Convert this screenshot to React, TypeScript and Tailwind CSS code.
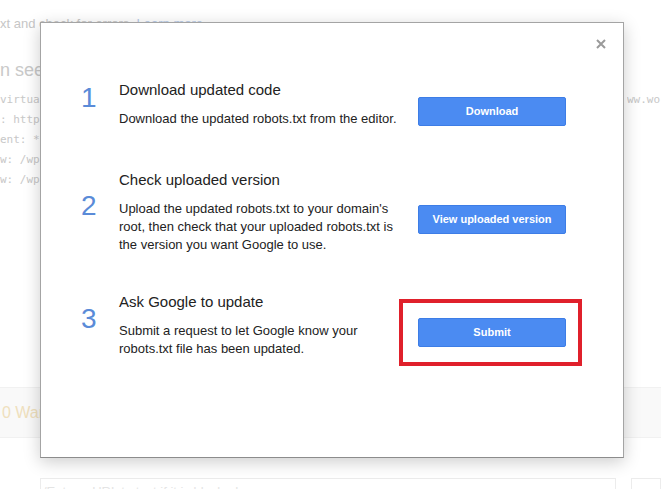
import React from "react";

const steps = [
  {
    n: "1",
    title: "Download updated code",
    desc: ["Download the updated robots.txt from the editor."],
    btn: "Download",
    mt: "mt-0",
    box: false,
  },
  {
    n: "2",
    title: "Check uploaded version",
    desc: [
      "Upload the updated robots.txt to your domain's",
      "root, then check that your uploaded robots.txt is",
      "the version you want Google to use.",
    ],
    btn: "View uploaded version",
    mt: "mt-[43px]",
    box: false,
  },
  {
    n: "3",
    title: "Ask Google to update",
    desc: ["Submit a request to let Google know your", "robots.txt file has been updated."],
    btn: "Submit",
    mt: "mt-[39px]",
    box: true,
  },
];

export default function App() {
  return (
    <div className="relative w-[661px] h-[489px] overflow-hidden bg-white font-['Liberation_Sans',Arial,sans-serif]">
      {/* faded background page */}
      <div className="flex flex-col whitespace-nowrap">
        <div className="mt-[16px] h-[16px] text-[13px] leading-[16px] text-[#c6c6c6]">
          xt and check for errors. <span className="text-[#b8cbe8]">Learn more</span>
        </div>
        <div className="mt-[26px] h-[24px] text-[18px] leading-[24px] text-[#c9c9c9]">
          n seen on 1/1/2024, 10:00 AM
        </div>
        <div className="mt-[8px] flex flex-col font-['DejaVu_Sans_Mono',monospace] text-[11px] leading-[20px] text-[#c8c8c8]">
          <div className="flex">
            <span>virtual robots.txt file was generated by the plugin</span>
            <span className="ml-auto w-[34px] overflow-hidden">ww.wordpress.org</span>
          </div>
          <div>: http://www.example.com/sitemap.xml</div>
          <div>ent: *</div>
          <div>w: /wp-admin/</div>
          <div>w: /wp-includes/</div>
        </div>
        <div className="mt-[197px] h-[51px] flex items-center bg-[#f9f9f9] border-y border-[#f1f1f1] text-[16px] text-[#efe0bd]">
          <span className="pl-[2px]">0 Warnings</span>
        </div>
        <div className="mt-[40px] flex gap-[15px] pl-[40px]">
          <div className="w-[584px] h-[30px] border border-[#ececec] px-[2px] pt-[3px] text-[13px] text-[#e4e4e4]">
            /Enter a URL to test if it is blocked
          </div>
          <div className="w-[30px] h-[30px] border border-[#ececec]"></div>
        </div>
      </div>

      {/* modal */}
      <div className="absolute left-[40px] top-[22px] w-[584px] h-[436px] bg-white border border-[#a4a4a4] border-b-[#8c8c8c] shadow-[0_4px_16px_rgba(0,0,0,0.2)]">
        <button className="absolute right-[17px] top-[16px] w-[10px] h-[10px]">
          <svg width="10" height="10" viewBox="0 0 10 10">
            <path d="M1 1L9 9M9 1L1 9" stroke="#9a9a9a" strokeWidth="2" />
          </svg>
        </button>
        <div className="flex flex-col pt-[58px] pl-[40px]">
          {steps.map((s) => (
            <div key={s.n} className={`flex items-center ${s.mt}`}>
              <div className="w-[38px] mb-[13px] text-[28px] leading-[28px] text-[#5a8bd8]">{s.n}</div>
              <div className="w-[299px] flex flex-col text-[#222222]">
                <div className="text-[15px] leading-[18px]">{s.title}</div>
                <div className="mt-[11px] flex flex-col text-[13px] leading-[18px] whitespace-nowrap">
                  {s.desc.map((l) => (
                    <span key={l}>{l}</span>
                  ))}
                </div>
              </div>
              <div className="relative mt-[14px]">
                <button className="w-[148px] h-[29px] rounded-[2px] bg-[#4b8bf2] border border-[#3d7de6] text-white text-[11px] font-bold">
                  {s.btn}
                </button>
                {s.box && (
                  <div className="absolute left-[-19px] top-[-19px] w-[183px] h-[67px] border-4 border-[#e0202b]"></div>
                )}
              </div>
            </div>
          ))}
        </div>
      </div>
    </div>
  );
}
